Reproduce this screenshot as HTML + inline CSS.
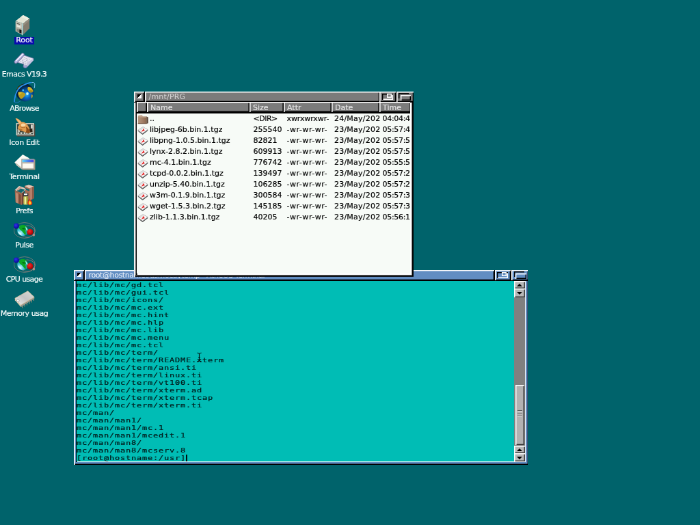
<!DOCTYPE html>
<html><head><meta charset="utf-8"><title>Desktop</title>
<style>
html,body{margin:0;padding:0;width:700px;height:525px;overflow:hidden;background:#00636b;}
#scr{position:absolute;left:0;top:0;width:1024px;height:768px;transform:scale(0.68359375);transform-origin:0 0;will-change:transform;font-family:"DejaVu Sans","Liberation Sans",sans-serif;font-size:11px;color:#000;}
.abs{position:absolute;}
/* desktop icons */
.dicon{position:absolute;left:0;width:140px;height:50px;}
.dicon svg{position:absolute;left:20px;top:0;width:32px;height:32px;}
.dicon .lbl{position:absolute;top:32px;left:-15px;width:101px;text-align:center;color:#f4fbfb;-webkit-text-stroke:0.22px #f4fbfb;font-size:11px;letter-spacing:-0.55px;line-height:13px;white-space:nowrap;}
.dicon .lbl span{display:inline-block;height:11px;line-height:10px;padding:0 2px;vertical-align:middle;}
.dicon .lbl.sel span{background:#0a0aae;}
/* windows */
.win{position:absolute;box-sizing:border-box;}
.tbar{position:absolute;left:0;top:0;right:0;height:16px;background:#000;}
.btn,.ttl{position:absolute;top:0;height:14.7px;box-sizing:border-box;padding-top:1px;box-shadow:inset 1.6px 1.6px 0 #fff,inset -1.3px -1.3px 0 #000;}
.ttl{font-size:11px;line-height:14.2px;white-space:nowrap;overflow:hidden;padding-left:6px;letter-spacing:0.2px;}
.btn i{position:absolute;display:block;box-sizing:border-box;}
.bclose i{left:4.5px;top:4px;width:6px;height:6px;background:linear-gradient(135deg,#000 50%,#fff 50%);}
.bzoom i.o{left:3.5px;top:2.5px;width:16px;height:9.5px;box-shadow:inset 1.4px 1.4px 0 #000,inset -1.4px -1.4px 0 #fff;}
.bzoom i.n{left:10.5px;top:2.5px;width:7px;height:6px;box-shadow:inset 0 0 0 1.4px #fff;}
.bdepth i.a{left:3.5px;top:2px;width:15px;height:8px;box-shadow:inset 1.4px 1.4px 0 #000;}
.bdepth i.b{left:6px;top:5px;width:15.5px;height:7.5px;box-shadow:inset 1.4px 1.4px 0 #fff,inset -1.4px -1.4px 0 #000;}
.frame{position:absolute;left:0;top:16px;right:0;bottom:0;box-shadow:inset 1.6px 0 0 #fff,inset -1.4px 0 0 #000,inset 0 -1.4px 0 #000;}
.inner{position:absolute;left:2.8px;top:16px;right:2.8px;bottom:2.8px;box-shadow:inset 1.8px 0 0 #000,inset -2.6px 0 0 #fff,inset 0 -2.6px 0 #fff;}
.cont{position:absolute;left:4px;top:16px;right:4.6px;bottom:4.6px;overflow:hidden;}
/* file window */
#fw{left:196px;top:134px;width:408.6px;height:270.8px;}
#fw .btn,#fw .ttl,#fw .frame{background:#7b7b7b;color:#d6d6d6;}
#fw .cont{background:#f7fbf7;top:15.3px;}
#fw .frame{box-shadow:inset 1.6px 0 0 #fff,inset -2.1px 0 0 #000,inset 0 -2.1px 0 #000;}
/* terminal */
#tw{left:108px;top:395px;width:665px;height:284.6px;}
#tw .btn,#tw .ttl,#tw .frame{background:#618dc2;color:#f2f6fc;}
#tw .btn .f{background:#618dc2;}
#tw .cont{background:#00bdb5;right:5px;}
#tw .inner{right:3.7px;bottom:3.3px;box-shadow:inset 1.8px 0 0 #000,inset -3px 0 0 #fff,inset 0 -2.6px 0 #fff;}
#tw .frame{box-shadow:inset 1.6px 0 0 #fff,inset -1.3px 0 0 #000,inset 0 -1.4px 0 #000;}
#term{position:absolute;left:0;top:0.3px;margin:0;transform:scaleY(0.785714);transform-origin:0 0;font-family:"DejaVu Sans Mono","Liberation Mono",monospace;font-size:12px;letter-spacing:0.775px;line-height:14px;color:#001c1c;-webkit-text-stroke:0.3px #001c1c;}
.sb{position:absolute;right:0;top:0;bottom:0;width:16px;background:#808080;}
.sbtn{position:absolute;left:0;width:16px;height:11px;box-sizing:border-box;background:#b8b8b8;box-shadow:inset 1.5px 1.5px 0 #fff,inset -1.5px -1.5px 0 #404040;}
.sbtn i{position:absolute;left:4.2px;top:3.6px;width:0;height:0;border:4.4px solid transparent;}
.sbtn.up i{border-bottom:4.2px solid #000;border-top:0;}
.sbtn.dn i{border-top:4.2px solid #000;border-bottom:0;top:4.6px;}
.thumb{position:absolute;left:1.5px;width:13.5px;box-sizing:border-box;background:#b2b2b2;box-shadow:inset 1.5px 1.5px 0 #fff,inset -1.5px -1.5px 0 #404040;}
.thumb i{position:absolute;left:3px;right:3px;height:1px;background:#606060;border-bottom:1px solid #e0e0e0;}
.hdr{position:absolute;top:0;height:16.3px;left:0;right:0;background:#000;}
.hc{position:absolute;top:0;height:15px;box-sizing:border-box;padding-top:2px;box-shadow:inset 1.6px 1.6px 0 #fff,inset -1.6px -1.6px 0 #000;background:#7b7b7b;color:#e4e4e4;font-size:11px;line-height:13.5px;padding-left:5px;-webkit-text-stroke:0.2px #e4e4e4;white-space:nowrap;overflow:hidden;}
.row{position:absolute;left:0;right:0;height:16px;line-height:16px;white-space:nowrap;-webkit-text-stroke:0.2px #000;}
.row span{position:absolute;top:0;overflow:hidden;height:16px;}
.row .n{left:19px;}
.row .s{left:170.5px;}
.row .a{left:219.5px;letter-spacing:0.53px;}
.row .d{left:289px;width:68px;letter-spacing:0.22px;}
.row .t{left:359.5px;width:41px;letter-spacing:-0.3px;}
.row svg{position:absolute;left:1px;top:0;width:16px;height:16px;}
</style></head>
<body>
<div id="scr">

<svg width="0" height="0" style="position:absolute"><defs>
<linearGradient id="fg" x1="0" x2="1"><stop offset="0" stop-color="#b4967e"/><stop offset="0.6" stop-color="#a07c64"/><stop offset="1" stop-color="#86664f"/></linearGradient>
<g id="ic-dir"><path d="M1 5 L1.4 2.8 L6.4 2.2 L8.4 4.6 Z" fill="#c4a68e"/><path d="M0.8 4.6 H13.6 V15 H0.8Z" fill="url(#fg)"/><path d="M0.8 4.6 H13.6 V6 H0.8Z" fill="#b8987e"/><path d="M13.4 4.6 L15.8 5.6 V14.2 L13.4 15Z" fill="#5e483a"/><path d="M0.8 14 H13.6 V15.2 H0.8Z" fill="#7c5e4a"/></g>
<g id="ic-f"><path d="M0.8 9.8 L7.6 15 L15.2 9.2 L15.2 7.6 L0.8 8.4Z" fill="#484848"/><path d="M0.8 8.4 L8.2 3.6 L15.2 7.6 L7.6 13.2 Z" fill="#fbfbfb" stroke="#a8a8a8" stroke-width="0.8"/><path d="M2.4 8.6 L8.2 4.8 L9.6 5.6 L3.8 9.6Z" fill="#dcdcdc"/><path d="M6.4 10.6 L9.2 7 L10 9.8 M7.6 9.2 L10.4 8.8" fill="none" stroke="#e02020" stroke-width="1.1"/></g>
</defs></svg>
<!-- desktop icons -->
<div id="icons">
<div class="dicon" style="top:20px"><svg viewBox="0 0 32 32"><polygon points="13.8,1.9 23.2,6.9 14,14.5 2.6,10.7" fill="#e2e4d4"/><polygon points="13.8,1.9 23.2,6.9 20,9.4 10.6,4.6" fill="#eeeee2"/><polygon points="2.6,10.7 14,14.5 13.4,31.4 2.6,25.8" fill="#b6b6a8"/><polygon points="14,14.5 23.2,6.9 23.2,21.4 14.2,30.4" fill="#847c6e"/><polygon points="14,14.5 23.2,6.9 23.2,10 14,18" fill="#968e80"/><polygon points="12.4,14 14,14.5 13.4,31.4 12,30.8" fill="#a8d0d0"/><polygon points="3.6,12.2 11.4,14.8 11.4,21.6 3.6,19" fill="#d0d0c4"/><polygon points="4.5,13.4 9.4,15 9.4,16.4 4.5,14.8" fill="#5c5c54"/><polygon points="5,17 9.5,18.6 9.5,20.4 5,18.8" fill="#eeeee4"/><polygon points="4.4,21.5 11,23.8 11,28.8 4.4,26" fill="#84847a"/><polygon points="8.4,23 11.4,24 11.4,29 8.4,27.8" fill="#141414"/></svg><div class="lbl sel"><span style="letter-spacing:-0.13px">Root</span></div></div>
<div class="dicon" style="top:70px"><svg viewBox="0 0 32 32"><polygon points="4,18 14,10.5 29,15.5 28.6,18.4 19.4,28 14,27 15,24 5,21" fill="#e6e6f2" stroke="#7e7eae" stroke-width="0.9"/><polygon points="22,20 28.6,15.8 28.6,18.4 19.4,28 17,27.4" fill="#c4c4e0"/><path d="M3.2 20.5 L13.2 10" stroke="#74749e" stroke-width="5.2" stroke-linecap="round"/><path d="M3.2 20.3 L13.2 9.8" stroke="#b8b8e4" stroke-width="3.6" stroke-linecap="round"/><path d="M3.6 18.8 L13.2 9.2" stroke="#fafaff" stroke-width="1.3" stroke-linecap="round"/><ellipse cx="17" cy="27.6" rx="2.8" ry="1.7" fill="#a8a8d8" stroke="#6c6c9c" stroke-width="0.8"/><g stroke="#8c8ca4" stroke-width="0.9" stroke-dasharray="1 1.5"><path d="M11 15.5 L22 19.5"/><path d="M10 17.5 L21 21.5"/><path d="M9.5 19.5 L20 23.5"/><path d="M13 13.6 L24 17.6"/><path d="M12 21.6 L18.6 24.8"/></g></svg><div class="lbl"><span style="letter-spacing:-0.56px">Emacs V19.3</span></div></div>
<div class="dicon" style="top:120px"><svg viewBox="0 0 32 32"><defs><radialGradient id="gl" cx="0.6" cy="0.62" r="0.72"><stop offset="0" stop-color="#28b8ff"/><stop offset="0.25" stop-color="#0868c8"/><stop offset="0.6" stop-color="#053468"/><stop offset="0.85" stop-color="#020c18"/><stop offset="1" stop-color="#000"/></radialGradient></defs><circle cx="16.6" cy="15.4" r="13" fill="url(#gl)"/><path d="M21 7 C24 6.5 27.5 9 28.6 13.5 C27 16 24 16 22.5 14 C20.5 12 19.5 9 21 7Z" fill="#d4b428"/><path d="M22 11 C24 12 26 12.6 28.4 12.4 C27.6 15.6 24 16 22.5 14Z" fill="#a88c18"/><path d="M6.6 15 C10 13.5 14 14.5 17.5 17.5 C16.5 21 13.5 23.5 11 25 C8 23 6 19 6.6 15Z" fill="#b89c20"/><path d="M7 15.4 C9 14.6 11 14.8 12.6 15.6 C11 17 9 18.6 7.4 19Z" fill="#d8bc30"/><path d="M26.4 18 C28 18.4 28.4 20.6 26.6 24 C25.4 22.6 25.6 20 26.4 18Z" fill="#c8a820"/><path d="M5 9 C8 5 12 3.2 15 3.2 C11 6 8 9 6 13Z" fill="#54480c"/><circle cx="20" cy="17" r="1.9" fill="#c8f8ff"/><circle cx="13.8" cy="12" r="1.4" fill="#40c0ff"/><path d="M0.7 29.2 C2 31 6 30.4 10 27.6" fill="none" stroke="#2478c8" stroke-width="1"/><path d="M0.7 29.2 C1.5 22 3 17 5.1 12.9 C8 8 11 5.6 15.1 4.1 C19 2.4 23 0.8 26.4 0.4" fill="none" stroke="#2890ec" stroke-width="1.9"/><path d="M26.4 0.4 C29 0.2 30.6 1 30.8 2.9 C31 5 30.6 7 30.1 9.1" fill="none" stroke="#8cc8f8" stroke-width="1"/></svg><div class="lbl"><span style="letter-spacing:-0.7px">ABrowse</span></div></div>
<div class="dicon" style="top:170px"><svg viewBox="0 0 32 32"><rect x="5" y="11.6" width="26.4" height="18" fill="#54463c"/><rect x="3.4" y="10" width="26.6" height="18" fill="#c4c8be"/><rect x="5" y="11.6" width="23.4" height="14.8" fill="#36423c"/><rect x="25.2" y="12.4" width="2.6" height="12" fill="#e4e4dc"/><rect x="5.4" y="23.4" width="20" height="2.6" fill="#d0d4c8"/><path d="M8 24.6 H10 M12 24.6 H15 M17 24.6 H18.4 M20 24.6 H23" stroke="#283028" stroke-width="1.6"/><path d="M5.6 19 H9 V23 H5.6Z" fill="#b8bcb0"/><path d="M2.6 3.2 C5 2.2 8.5 4.8 11.5 8.3 C14 7.8 17.5 9.3 20 12.4 C22.6 15.8 24 20 24.5 23.6 C22 25 19 24.6 17.6 23.4 C14 22 9.6 21.4 7 19.4 C5.4 17 6 14 8.6 12.4 C7 9.6 4.4 6.4 2.6 3.2Z" fill="#e29c50"/><path d="M3.2 3.6 C5.4 3.4 8.4 6 10.6 9 L9 11.4 C7.4 8.8 5 5.8 3.2 3.6Z" fill="#f4bc7c"/><path d="M11 11.6 C13.5 9.8 16 10.4 17.8 12.8 C16.4 15 13 15.6 11 14.4Z" fill="#fad8a4"/><path d="M17.6 15.4 C20 15.8 22.6 19 24.5 23.6 C22 25 19 24.6 17.6 23.4 C19.2 21 18.6 18 17.6 15.4Z" fill="#8c4c18"/><path d="M7 19.4 C9 17.8 11.8 18.2 13.2 20.4 L11 21.8Z" fill="#b87030"/><path d="M9 15 C11 16.6 14 17 16.4 16.4" fill="none" stroke="#a86428" stroke-width="0.8"/><path d="M22.8 19.6 L27.2 17.6 L27.6 23 L24.5 23.6Z" fill="#2c2014"/></svg><div class="lbl"><span style="letter-spacing:-0.37px">Icon Edit</span></div></div>
<div class="dicon" style="top:220px"><svg viewBox="0 0 32 32"><defs><linearGradient id="tb" x1="0" x2="1"><stop offset="0" stop-color="#60d8f8"/><stop offset="0.5" stop-color="#4880f0"/><stop offset="1" stop-color="#5040d8"/></linearGradient></defs><polygon points="1.3,17.6 13.2,6 23,11.4 12,27.6 5,22.6" fill="#fbfbf5"/><polygon points="1.3,17.6 5,22.6 12,27.6 11.4,25 4.8,19.6" fill="#c0bcac"/><rect x="12.4" y="13.4" width="19" height="15" fill="#b49880"/><rect x="11.3" y="12.4" width="19" height="15" fill="#9c9890"/><rect x="12.6" y="13.6" width="16.6" height="12.8" fill="#f4f0e4"/><rect x="12.6" y="13.6" width="16.6" height="3.8" fill="url(#tb)"/><rect x="12.6" y="17.4" width="16.6" height="1.4" fill="#a8a49c"/><rect x="14" y="20" width="13.6" height="5.4" fill="#fcfaf2"/></svg><div class="lbl"><span style="letter-spacing:-0.24px">Terminal</span></div></div>
<div class="dicon" style="top:270px"><svg viewBox="0 0 32 32"><polygon points="16,2 22,0.4 29.4,2.6 29.4,20 24,23 17,21" fill="#a46c56"/><polygon points="16,2 22,0.4 29.4,2.6 23,5.4" fill="#e8c8b8"/><polygon points="23,5.4 29.4,2.6 29.4,20 24,23" fill="#b4806a"/><polygon points="27,4 29.4,2.6 29.4,20 27,21.4" fill="#8c5844"/><polygon points="17,5 23,7 23,9.4 17,7.4" fill="#106870"/><polygon points="1.6,8 8,2 15,4.4 18,7 12,12.6" fill="#e8ccbc"/><polygon points="3,10 10,5.4 16.4,7.6 11,12.2" fill="#106870"/><polygon points="4,7.4 9,3.4 12,4.4 7,8.4" fill="#c8a090"/><polygon points="1.6,8 12,12.6 12,30 2.6,26" fill="#9c6850"/><polygon points="3,11.6 6,13 6,27.4 3.4,26.2" fill="#c08c74"/><polygon points="8,14 10.4,15 10.4,29 8,28" fill="#7c4c3a"/><polygon points="12,12.6 15,10 15,27 12,30" fill="#74443a"/><rect x="14.4" y="17" width="6.4" height="12.6" rx="1.4" fill="#c8c858"/><rect x="16.4" y="18" width="1.6" height="10.4" fill="#f0f0a8"/><rect x="19" y="18" width="1.6" height="11" fill="#8c8c30"/><rect x="13.8" y="12.4" width="7.6" height="4.8" rx="1.2" fill="#383838"/><rect x="15" y="13.2" width="5" height="2" fill="#f4f4f4"/><path d="M21 29 C19 26 22 24 22.6 20.6 C24.6 23 27.8 24.6 27.2 28 C26.2 30.6 22.6 30.8 21 29Z" fill="#e43414"/><path d="M22 28.2 C21.4 26 23 25 23.4 23.2 C24.6 25 26.2 26 25.6 28 C24.8 29.6 22.6 29.4 22 28.2Z" fill="#ffd028"/></svg><div class="lbl"><span style="letter-spacing:-0.4px">Prefs</span></div></div>
<div class="dicon" style="top:320px"><svg viewBox="0 0 32 32"><defs><radialGradient id="pb" cx="0.4" cy="0.35" r="0.7"><stop offset="0" stop-color="#3030f0"/><stop offset="1" stop-color="#060688"/></radialGradient><radialGradient id="pr" cx="0.4" cy="0.35" r="0.7"><stop offset="0" stop-color="#ff2828"/><stop offset="1" stop-color="#980000"/></radialGradient><radialGradient id="pg" cx="0.3" cy="0.75" r="0.85"><stop offset="0" stop-color="#c0f8ff"/><stop offset="0.4" stop-color="#38b8d0"/><stop offset="1" stop-color="#067030"/></radialGradient></defs><ellipse cx="15.8" cy="17" rx="15.6" ry="11.4" fill="none" stroke="#8c807c" stroke-width="0.8"/><ellipse cx="20" cy="18.6" rx="11" ry="8.6" fill="none" stroke="#a08078" stroke-width="0.8"/><circle cx="13.4" cy="17" r="8.3" fill="url(#pg)"/><path d="M8 12 C10 8.6 15 8 18 10.6 C20 13 19 16 16.6 16.4 C17.6 19 18.4 21.4 17.4 24 C14.6 21.6 13 18.4 11 17.2 C9 16 7.6 14.6 8 12Z" fill="#0ca824"/><path d="M12 14 C14 13 16 13.4 17 15 C15.4 16 13.4 15.8 12 14Z" fill="#056818"/><path d="M17 11 C19.6 13 21.2 16 20.8 19.4 C19.6 17.6 18 16 17.6 14Z" fill="#90ecfc"/><path d="M6 18 C7 21 9 23.4 12 24.6 C10.6 22 8.6 19.6 6 18Z" fill="#e4fcff"/><circle cx="3.9" cy="10.6" r="4" fill="url(#pb)"/><circle cx="24" cy="19.4" r="4.6" fill="url(#pr)"/><ellipse cx="29.4" cy="23.6" rx="1.7" ry="2.1" fill="#b09088"/></svg><div class="lbl"><span style="letter-spacing:-0.53px">Pulse</span></div></div>
<div class="dicon" style="top:370px"><svg viewBox="0 0 32 32"><defs><radialGradient id="pb2" cx="0.4" cy="0.35" r="0.7"><stop offset="0" stop-color="#3030f0"/><stop offset="1" stop-color="#060688"/></radialGradient><radialGradient id="pr2" cx="0.4" cy="0.35" r="0.7"><stop offset="0" stop-color="#ff2828"/><stop offset="1" stop-color="#980000"/></radialGradient><radialGradient id="pg2" cx="0.3" cy="0.75" r="0.85"><stop offset="0" stop-color="#c0f8ff"/><stop offset="0.4" stop-color="#38b8d0"/><stop offset="1" stop-color="#067030"/></radialGradient></defs><ellipse cx="15.8" cy="17" rx="15.6" ry="11.4" fill="none" stroke="#8c807c" stroke-width="0.8"/><ellipse cx="20" cy="18.6" rx="11" ry="8.6" fill="none" stroke="#a08078" stroke-width="0.8"/><circle cx="13.4" cy="17" r="8.3" fill="url(#pg2)"/><path d="M8 12 C10 8.6 15 8 18 10.6 C20 13 19 16 16.6 16.4 C17.6 19 18.4 21.4 17.4 24 C14.6 21.6 13 18.4 11 17.2 C9 16 7.6 14.6 8 12Z" fill="#0ca824"/><path d="M12 14 C14 13 16 13.4 17 15 C15.4 16 13.4 15.8 12 14Z" fill="#056818"/><path d="M17 11 C19.6 13 21.2 16 20.8 19.4 C19.6 17.6 18 16 17.6 14Z" fill="#90ecfc"/><path d="M6 18 C7 21 9 23.4 12 24.6 C10.6 22 8.6 19.6 6 18Z" fill="#e4fcff"/><circle cx="3.9" cy="10.6" r="4" fill="url(#pb2)"/><circle cx="24" cy="19.4" r="4.6" fill="url(#pr2)"/><ellipse cx="29.4" cy="23.6" rx="1.7" ry="2.1" fill="#b09088"/></svg><div class="lbl"><span style="letter-spacing:-0.61px">CPU usage</span></div></div>
<div class="dicon" style="top:420px"><svg viewBox="0 0 32 32"><defs><linearGradient id="mc" x1="0" y1="1" x2="1" y2="0"><stop offset="0" stop-color="#f0f0f0"/><stop offset="0.5" stop-color="#c4c4c4"/><stop offset="1" stop-color="#dcdcd8"/></linearGradient></defs><g stroke="#8c8c78" stroke-width="1.2"><path d="M12.6 25 V30.4"/><path d="M16 23 V28.4"/><path d="M19.4 21 V26.4"/><path d="M22.8 19 V24.4"/><path d="M26.2 17 V22.4"/><path d="M29.4 15 V20"/></g><polygon points="1.9,16.3 20.7,5.7 30.1,14.5 30.1,16.8 10.4,29 1.9,19.2" fill="#d8ccb0"/><polygon points="10.1,26.4 30.1,14.5 30.1,16.8 10.4,29" fill="#98948a"/><polygon points="1.9,16.3 20.7,5.7 30.1,14.5 10.1,26.4" fill="url(#mc)" stroke="#d0c098" stroke-width="0.7"/><circle cx="6.2" cy="19.8" r="1.9" fill="#fafafa" stroke="#909090" stroke-width="0.7"/></svg><div class="lbl"><span style="letter-spacing:-0.45px">Memory usag</span></div></div>
</div>

<!-- terminal window -->
<div class="win" id="tw">
  <div class="tbar">
    <div class="btn bclose" style="left:0;width:15px;"><i></i></div>
    <div class="ttl" style="left:15.5px;right:50px;letter-spacing:-0.4px">root@hostname:/usr/local/temp - AtheOS Terminal</div>
    <div class="btn bzoom" style="right:26px;width:23.5px;"><i class="o"></i><i class="n"></i></div>
    <div class="btn bdepth" style="right:0;width:24.8px;"><i class="a"></i><i class="b f"></i></div>
  </div>
  <div class="frame"></div>
  <div class="inner"></div>
  <div class="cont">
<pre id="term">mc/lib/mc/gd.tcl
mc/lib/mc/gui.tcl
mc/lib/mc/icons/
mc/lib/mc/mc.ext
mc/lib/mc/mc.hint
mc/lib/mc/mc.hlp
mc/lib/mc/mc.lib
mc/lib/mc/mc.menu
mc/lib/mc/mc.tcl
mc/lib/mc/term/
mc/lib/mc/term/README.xterm
mc/lib/mc/term/ansi.ti
mc/lib/mc/term/linux.ti
mc/lib/mc/term/vt100.ti
mc/lib/mc/term/xterm.ad
mc/lib/mc/term/xterm.tcap
mc/lib/mc/term/xterm.ti
mc/man/
mc/man/man1/
mc/man/man1/mc.1
mc/man/man1/mcedit.1
mc/man/man8/
mc/man/man8/mcserv.8
[root@hostname:/usr]</pre>
    <div class="abs" style="left:160.4px;top:254px;width:1.2px;height:10px;background:#001010;"></div>
    <div class="sb">
      <div class="sbtn up" style="top:0;height:11px"><i></i></div>
      <div class="sbtn dn" style="top:11px;height:12.5px"><i></i></div>
      <div class="thumb" style="top:152px;height:87.5px;"><i style="top:37px"></i><i style="top:41px"></i><i style="top:45px"></i></div>
      <div class="sbtn up" style="top:241px"><i></i></div>
      <div class="sbtn dn" style="top:252px;height:12px"><i></i></div>
    </div>
  </div>
</div>

<svg class="abs" style="left:286.6px;top:515.4px;width:9px;height:15px" viewBox="0 0 10 16"><path d="M1.5 1 C3.5 1 4.6 1.6 5 2.6 C5.4 1.6 6.5 1 8.5 1 M5 2.6 V13.4 M1.5 15 C3.5 15 4.6 14.4 5 13.4 C5.4 14.4 6.5 15 8.5 15 M3.4 8 H6.6" fill="none" stroke="#001010" stroke-width="1.25"/></svg>
<!-- file window -->
<div class="win" id="fw">
  <div class="tbar">
    <div class="btn bclose" style="left:0;width:15px;"><i></i></div>
    <div class="ttl" style="left:15.5px;right:50px;">/mnt/PRG</div>
    <div class="btn bzoom" style="right:26px;width:23.5px;"><i class="o"></i><i class="n"></i></div>
    <div class="btn bdepth" style="right:0;width:24.8px;"><i class="a"></i><i class="b f"></i></div>
  </div>
  <div class="frame"></div>
  <div class="inner"></div>
  <div class="cont">
    <div class="hdr">
      <div class="hc" style="left:0;width:15px;"></div>
      <div class="hc" style="left:15px;width:150px;">Name</div>
      <div class="hc" style="left:165px;width:50px;">Size</div>
      <div class="hc" style="left:215px;width:70px;">Attr</div>
      <div class="hc" style="left:285px;width:70px;">Date</div>
      <div class="hc" style="left:355px;width:46px;">Time</div>
    </div>
    <div id="rows">
<div class="row" style="top:16.7px"><svg viewBox="0 0 16 16"><use href="#ic-dir"/></svg><span class="n">..</span><span class="s" style="letter-spacing:-0.5px">&lt;DIR&gt;</span><span class="a" style="letter-spacing:-0.1px">xwrxwrxwr-</span><span class="d">24/May/202</span><span class="t">04:04:4</span></div>
<div class="row" style="top:32.7px"><svg viewBox="0 0 16 16"><use href="#ic-f"/></svg><span class="n">libjpeg-6b.bin.1.tgz</span><span class="s">255540</span><span class="a">-wr-wr-wr-</span><span class="d">23/May/202</span><span class="t">05:57:4</span></div>
<div class="row" style="top:48.7px"><svg viewBox="0 0 16 16"><use href="#ic-f"/></svg><span class="n">libpng-1.0.5.bin.1.tgz</span><span class="s">82821</span><span class="a">-wr-wr-wr-</span><span class="d">23/May/202</span><span class="t">05:57:5</span></div>
<div class="row" style="top:64.7px"><svg viewBox="0 0 16 16"><use href="#ic-f"/></svg><span class="n">lynx-2.8.2.bin.1.tgz</span><span class="s">609913</span><span class="a">-wr-wr-wr-</span><span class="d">23/May/202</span><span class="t">05:57:5</span></div>
<div class="row" style="top:80.7px"><svg viewBox="0 0 16 16"><use href="#ic-f"/></svg><span class="n">mc-4.1.bin.1.tgz</span><span class="s">776742</span><span class="a">-wr-wr-wr-</span><span class="d">23/May/202</span><span class="t">05:55:5</span></div>
<div class="row" style="top:96.7px"><svg viewBox="0 0 16 16"><use href="#ic-f"/></svg><span class="n">tcpd-0.0.2.bin.1.tgz</span><span class="s">139497</span><span class="a">-wr-wr-wr-</span><span class="d">23/May/202</span><span class="t">05:57:2</span></div>
<div class="row" style="top:112.7px"><svg viewBox="0 0 16 16"><use href="#ic-f"/></svg><span class="n">unzip-5.40.bin.1.tgz</span><span class="s">106285</span><span class="a">-wr-wr-wr-</span><span class="d">23/May/202</span><span class="t">05:57:2</span></div>
<div class="row" style="top:128.7px"><svg viewBox="0 0 16 16"><use href="#ic-f"/></svg><span class="n">w3m-0.1.9.bin.1.tgz</span><span class="s">300584</span><span class="a">-wr-wr-wr-</span><span class="d">23/May/202</span><span class="t">05:57:3</span></div>
<div class="row" style="top:144.7px"><svg viewBox="0 0 16 16"><use href="#ic-f"/></svg><span class="n">wget-1.5.3.bin.2.tgz</span><span class="s">145185</span><span class="a">-wr-wr-wr-</span><span class="d">23/May/202</span><span class="t">05:57:3</span></div>
<div class="row" style="top:160.7px"><svg viewBox="0 0 16 16"><use href="#ic-f"/></svg><span class="n">zlib-1.1.3.bin.1.tgz</span><span class="s">40205</span><span class="a">-wr-wr-wr-</span><span class="d">23/May/202</span><span class="t">05:56:1</span></div>
</div>
  </div>
</div>

</div>
</body></html>
